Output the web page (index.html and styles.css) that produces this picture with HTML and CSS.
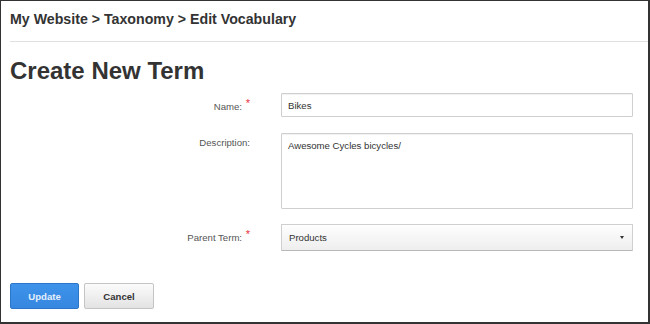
FILE: index.html
```html
<!DOCTYPE html>
<html>
<head>
  <meta name="viewport" content="width=device-width, initial-scale=1">
  <link rel="stylesheet" href="styles.css">
</head>
<body>

  <div class="frame">
    <div class="breadcrumb">My Website &gt; Taxonomy &gt; Edit Vocabulary</div>

    <h1>Create New Term</h1>

    <form class="termForm" action="index.html">
      <label class="fieldLabel" for="termName">Name: <span class="required">*</span></label>
      <input class="textInput" type="text" id="termName" name="termName" value="Bikes">

      <label class="fieldLabel descLabel" for="termDesc">Description:</label>
      <textarea class="textArea" id="termDesc" name="termDesc">Awesome Cycles bicycles/</textarea>

      <label class="fieldLabel" for="parentTerm">Parent Term: <span class="required">*</span></label>
      <div class="dropdown" id="parentTerm">
        <span>Products</span>
        <span class="caret"></span>
      </div>
    </form>

    <div class="buttonRow">
      <button class="myButton primary" type="button">Update</button>
      <button class="myButton" type="button">Cancel</button>
    </div>
  </div>

</body>
</html>
```

FILE: styles.css
```css
html, body {
  margin: 0;
  background-color: #fff;
}

body {
  font-family: "Liberation Sans", Arial, sans-serif;
  color: #333;
}

.frame {
  height: 324px;
  box-sizing: border-box;
  border: 1px solid #333;
  border-right-width: 2px;
  border-bottom-width: 2px;
  padding-left: 9px;
}

.breadcrumb {
  font-size: 14.2px;
  font-weight: bold;
  line-height: 17px;
  padding: 10px 0 13px 0;
  border-bottom: 1px solid #e0e0e0;
}

h1 {
  margin: 15px 0 0 0;
  font-size: 24px;
  line-height: 28px;
  font-weight: bold;
}

.termForm {
  display: grid;
  grid-template-columns: 240px 352px;
  column-gap: 31px;
  row-gap: 15px;
  margin-top: 8px;
}

.fieldLabel {
  font-size: 9.6px;
  line-height: 12px;
  color: #555;
  text-align: right;
  padding-top: 4px;
}

.descLabel {
  margin-top: 1px;
}

.required {
  color: #e8323c;
  font-size: 11px;
  vertical-align: 3px;
  margin-left: 1px;
}

.textInput,
.textArea,
.dropdown {
  box-sizing: border-box;
  width: 352px;
  margin: 0;
  border: 1px solid #cfcfcf;
  border-radius: 1px;
  font-family: "Liberation Sans", Arial, sans-serif;
  font-size: 9.6px;
  color: #333;
  background: #fff;
  box-shadow: inset 0 1px 1px rgba(0,0,0,0.06);
}

.textInput {
  height: 24px;
  padding: 0 6px;
  outline: none;
}

.textArea {
  height: 76px;
  margin-top: 1px;
  padding: 6px 6px;
  resize: none;
  line-height: 12px;
}

.dropdown {
  height: 27px;
  padding: 0 8px 0 7px;
  display: flex;
  align-items: center;
  justify-content: space-between;
  background: linear-gradient(#fefefe, #eeeeee);
  border-bottom-color: #b8b8b8;
  box-shadow: none;
}

.caret {
  width: 0;
  height: 0;
  border-left: 2.5px solid transparent;
  border-right: 2.5px solid transparent;
  border-top: 3px solid #333;
}

.buttonRow {
  display: flex;
  gap: 5px;
  margin-top: 32px;
}

.myButton {
  height: 26px;
  box-sizing: border-box;
  padding: 0;
  font-family: "Liberation Sans", Arial, sans-serif;
  font-size: 9.6px;
  font-weight: bold;
  border-radius: 2px;
  width: 70px;
  color: #333;
  border: 1px solid #c4c4c4;
  background: linear-gradient(#fbfbfb, #e3e3e3);
}

.myButton.primary {
  width: 69px;
  color: #e4effb;
  border-color: #2b76c8;
  background: linear-gradient(#3f93ea, #3587e0);
}
```
